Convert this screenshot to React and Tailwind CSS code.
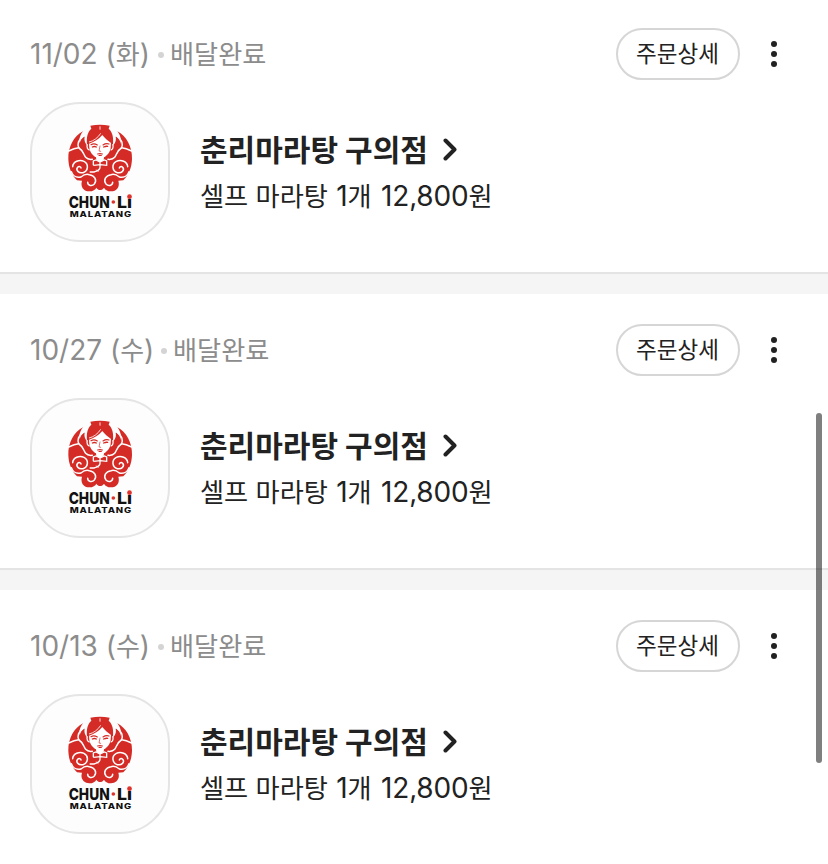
const orders = [
  { date: "11/02", day: "화", dateWidth: "w-[118px]" },
  { date: "10/27", day: "수", dateWidth: "w-[121px]" },
  { date: "10/13", day: "수", dateWidth: "w-[118px]" },
];

function EmblemHalf() {
  return (
    <g>
      {/* outer petal, shoulder and cloud silhouettes */}
      <path
        d="M174 103 C147 117 129 149 130 186 C131 213 140 234 156 250 L171 251 C165 270 177 283 193 283 C204 283 211 278 214 272 C217 277 221 279 226 279 L226 140 L190 144 C184 142 178 145 173 151 C159 140 161 119 174 103 Z"
        fill="#d52b26"
      />
      {/* inner petal */}
      <path d="M177 119 C164 128 161 143 167 155 L178 150 L185 143 C179 136 177 127 179 119 Z" fill="#d52b26" />
      <g fill="none" stroke="#fff" strokeWidth="4.5" strokeLinecap="round">
        <path d="M174 118 C159 127 157 143 161 152 C151 153 141 157 131 162" />
        <path d="M162 153 C174 160 176 173 182 181 C187 187 194 188 202 187" />
        <path d="M143 209 C144 194 163 186 177 193 C192 201 190 222 174 227 C161 230 151 219 158 211 C162 207 168 209 168 213" />
        <path d="M139 224 C144 237 156 243 168 240 C174 235 183 230 193 233 C209 235 217 250 208 261 C201 269 188 266 188 256" />
      </g>
    </g>
  );
}

function ChunLiLogo() {
  return (
    <svg viewBox="21 21 408 408" className="size-full" role="img">
      <EmblemHalf />
      <g transform="translate(451 0) scale(-1 1)">
        <EmblemHalf />
      </g>

      {/* hair */}
      <path
        d="M196 86 Q225 80 254 86 L251 95 C262 104 266 121 264 141 L259 157 L192 157 L186 141 C184 121 188 104 199 95 Z"
        fill="#d52b26"
      />
      <path d="M225 88 L225 98" stroke="#fff" strokeWidth="2.5" />
      {/* face */}
      <path
        d="M192 140 C206 136 223 125 232 114 C239 124 250 132 258 138 L257 153 C255 166 246 176 237 181 L236 189 L225 195 L214 189 L213 181 C204 176 195 166 193 153 Z"
        fill="#fff"
      />
      <path d="M192 135 C206 132 219 122 227 109" fill="none" stroke="#fff" strokeWidth="2.5" />
      <path d="M187 142 C184 151 188 159 194 159 M263 142 C267 151 262 159 257 159" fill="none" stroke="#fff" strokeWidth="4" />
      <g fill="none" stroke="#d52b26" strokeWidth="3.5" strokeLinecap="round">
        <path d="M198 143 Q207 138 217 144 M234 144 Q243 138 252 141" />
        <path d="M202 150 Q208 147 214 150 M236 150 Q243 147 248 148" strokeWidth="4" />
        <path d="M225 147 L222 162 L227 163" strokeWidth="2" />
        <path d="M218 171 Q225 168 232 171 M222 175 L229 175" />
      </g>
      {/* collar and placket */}
      <path d="M206 192 L213 188 L225 196 L238 188 L244 192 L244 205 L206 205 Z" fill="#d52b26" />
      <g fill="none" stroke="#fff" strokeWidth="4">
        <path d="M205 205 L205 192 L213 189 L225 195 L238 189 L245 192 L245 205 L226 203 L205 205" />
        <path d="M225 196 L225 211 C224 221 214 222 208 225 L194 225" />
        <path d="M214 218 L220 224" strokeWidth="3" />
      </g>

      <text
        x="131"
        y="332"
        textLength="123"
        lengthAdjust="spacingAndGlyphs"
        className="font-['Inter',sans-serif] text-[48px] font-extrabold"
        fill="#111"
      >
        CHUN
      </text>
      <circle cx="265" cy="315" r="5.5" fill="#e0322b" />
      <text
        x="276"
        y="332"
        textLength="45"
        lengthAdjust="spacingAndGlyphs"
        className="font-['Inter',sans-serif] text-[48px] font-extrabold"
        fill="#111"
      >
        Li
      </text>
      <circle cx="313.5" cy="299" r="7" fill="#e0322b" />
      <text
        x="134"
        y="358.5"
        textLength="187"
        lengthAdjust="spacingAndGlyphs"
        className="font-['Inter',sans-serif] text-[22.5px] font-extrabold tracking-[2px]"
        fill="#111"
      >
        MALATANG
      </text>
    </svg>
  );
}

function Order({ order }) {
  return (
    <article className="h-[276px] shrink-0 border-b-2 border-[#e4e4e4] bg-white pt-[30px] pl-[30px]">
      <header className="flex h-[52px] items-center pr-[51px]">
        <div className="flex flex-1 items-center text-[28px] leading-[52px] whitespace-nowrap text-[#8c8c8c]">
          <span className={order.dateWidth}>
            {order.date} (<span className="text-[26px]">{order.day}</span>)
          </span>
          <span className="mt-0.5 ml-2.5 size-1.5 rounded-full bg-[#d4d4d4]" />
          <span className="ml-[6px] pt-px text-[26.2px]">배달완료</span>
        </div>
        <button className="h-[52px] w-[124px] rounded-full border-2 border-[#d6d6d6] pr-px text-[22.5px] leading-[46px] whitespace-nowrap text-[#222]">
          주문상세
        </button>
        <button className="ml-[31px] flex h-[26px] w-1.5 flex-col justify-between">
          <span className="size-1.5 rounded-full bg-[#222]" />
          <span className="size-1.5 rounded-full bg-[#222]" />
          <span className="size-1.5 rounded-full bg-[#222]" />
        </button>
      </header>
      <div className="mt-[22px] flex">
        <div className="size-[140px] shrink-0 rounded-[50px] border-2 border-[#e5e5e5] bg-[#fdfdfd]">
          <ChunLiLogo />
        </div>
        <div className="ml-[30px] pt-[25px] whitespace-nowrap text-[#222]">
          <h2 className="flex h-[46px] items-center text-[30px] leading-[46px] font-bold">
            <span>춘리마라탕 구의점</span>
            <svg viewBox="0 0 14 24" className="ml-[15px] h-6 w-3.5" fill="none">
              <path d="M2.5 2.5 L11.5 11.5 L2.5 20.5" stroke="#222" strokeWidth="4" strokeLinecap="round" strokeLinejoin="round" />
            </svg>
          </h2>
          <p className="h-[46px] text-[26.2px] leading-[46px]">
            셀프 마라탕 <span className="ml-px text-[28px]">1</span>개{" "}
            <span className="ml-0.5 text-[28px] tracking-[-0.2px]">12,800</span>원
          </p>
        </div>
      </div>
    </article>
  );
}

export default function App() {
  return (
    <main className="relative h-[864px] w-[828px] overflow-hidden bg-[#f5f5f5] font-['Inter','Noto_Sans_CJK_KR',sans-serif]">
      <div className="-mt-0.5 flex flex-col gap-5">
        {orders.map((order) => (
          <Order key={order.date} order={order} />
        ))}
      </div>
      <div className="absolute top-[413px] right-[6px] h-[350px] w-1.5 rounded-full bg-black/50" />
    </main>
  );
}
